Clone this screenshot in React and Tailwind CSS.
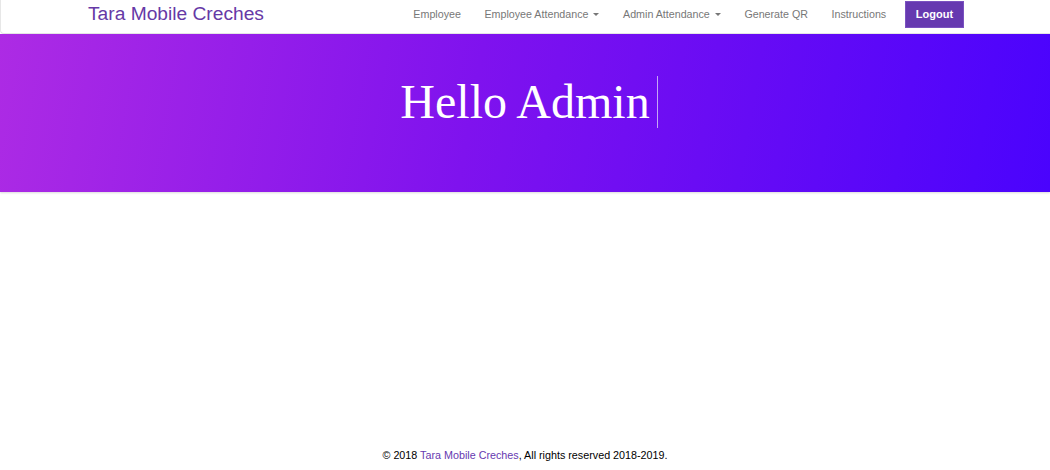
import React from 'react';

const links = [
  { label: 'Employee' },
  { label: 'Employee Attendance', caret: true },
  { label: 'Admin Attendance', caret: true },
  { label: 'Generate QR' },
  { label: 'Instructions' },
];

function Caret() {
  return (
    <span className="ml-[5px] inline-block h-0 w-0 border-x-[3px] border-t-[3px] border-x-transparent border-t-[#777] align-middle" />
  );
}

export default function App() {
  return (
    <div className="flex min-h-[470px] flex-col bg-white font-['Liberation_Sans',Arial,sans-serif]">
      <nav className="h-[34px] rounded-bl-[4px] border-b border-l border-[#e7e7e7] bg-white">
        <div className="flex h-full items-center justify-between pl-[87px] pr-[86px]">
          <a className="-mt-[5px] text-[19.2px] leading-none text-[#6639a6]">Tara Mobile Creches</a>
          <ul className="flex h-full items-center">
            {links.map((l) => (
              <li key={l.label} className="-mt-[5px] px-[11.8px] text-[10.7px] leading-none text-[#777]">
                {l.label}
                {l.caret && <Caret />}
              </li>
            ))}
            <li className="ml-[7px] self-start pt-[1px]">
              <button className="h-[27px] w-[59px] border border-[#7a52c0] bg-[#6639b0] text-[11px] font-bold text-white">
                Logout
              </button>
            </li>
          </ul>
        </div>
      </nav>

      <section className="flex h-[158px] justify-center bg-[linear-gradient(100deg,#ad2be4_0%,#7f12ee_45%,#4a03fd_100%)] shadow-[0_1px_2px_rgba(0,0,0,0.15)]">
        <h1 className="mt-[42px] ml-[8px] h-[52px] border-r border-[#c5a6f5] pr-[7px] font-['Liberation_Serif','Times_New_Roman',serif] text-[48px] leading-[52px] text-white">
          Hello Admin
        </h1>
      </section>

      <div className="flex-1" />

      <footer className="pb-[7px] text-center text-[10.75px] leading-[16px] text-black">
        © 2018 <a className="text-[#6639b0]">Tara Mobile Creches</a>, All rights reserved 2018-2019.
      </footer>
    </div>
  );
}
